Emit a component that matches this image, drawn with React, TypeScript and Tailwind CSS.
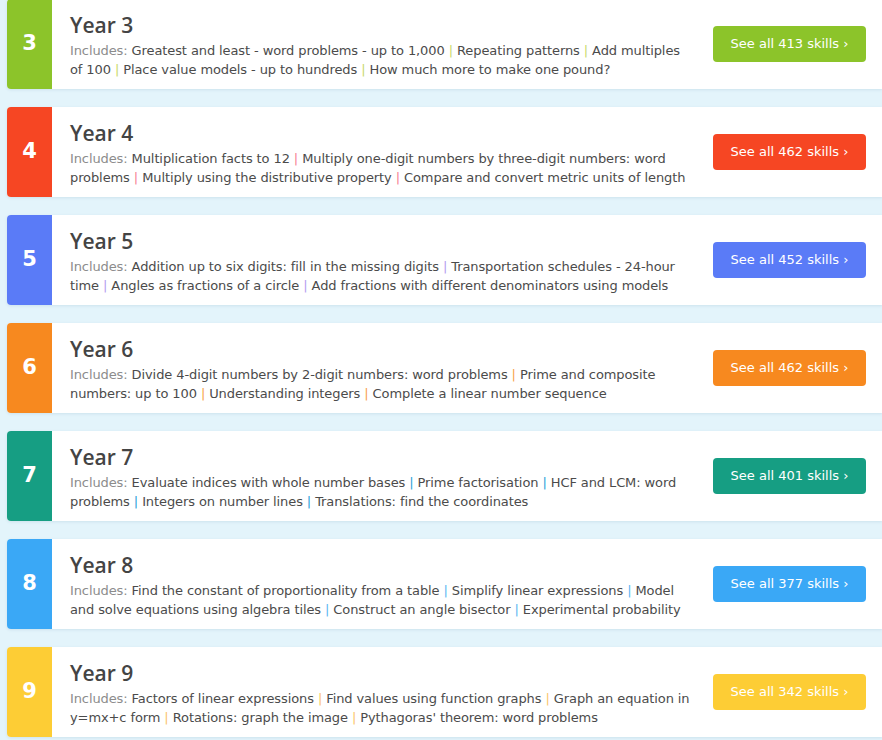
import React from "react";

type Year = {
  n: number;
  color: string;
  sep: string;
  skills: number;
  items: string[];
};

const years: Year[] = [
  {
    n: 3,
    color: "bg-[#8cc42a]",
    sep: "text-[#c9d96a]",
    skills: 413,
    items: [
      "Greatest and least - word problems - up to 1,000",
      "Repeating patterns",
      "Add multiples of 100",
      "Place value models - up to hundreds",
      "How much more to make one pound?",
    ],
  },
  {
    n: 4,
    color: "bg-[#f64623]",
    sep: "text-[#f77f93]",
    skills: 462,
    items: [
      "Multiplication facts to 12",
      "Multiply one-digit numbers by three-digit numbers: word problems",
      "Multiply using the distributive property",
      "Compare and convert metric units of length",
    ],
  },
  {
    n: 5,
    color: "bg-[#5a7bf7]",
    sep: "text-[#b49cf0]",
    skills: 452,
    items: [
      "Addition up to six digits: fill in the missing digits",
      "Transportation schedules - 24-hour time",
      "Angles as fractions of a circle",
      "Add fractions with different denominators using models",
    ],
  },
  {
    n: 6,
    color: "bg-[#f7891f]",
    sep: "text-[#f8a24a]",
    skills: 462,
    items: [
      "Divide 4-digit numbers by 2-digit numbers: word problems",
      "Prime and composite numbers: up to 100",
      "Understanding integers",
      "Complete a linear number sequence",
    ],
  },
  {
    n: 7,
    color: "bg-[#169e83]",
    sep: "text-[#2a9fd8]",
    skills: 401,
    items: [
      "Evaluate indices with whole number bases",
      "Prime factorisation",
      "HCF and LCM: word problems",
      "Integers on number lines",
      "Translations: find the coordinates",
    ],
  },
  {
    n: 8,
    color: "bg-[#3aa8f6]",
    sep: "text-[#5cb6f2]",
    skills: 377,
    items: [
      "Find the constant of proportionality from a table",
      "Simplify linear expressions",
      "Model and solve equations using algebra tiles",
      "Construct an angle bisector",
      "Experimental probability",
    ],
  },
  {
    n: 9,
    color: "bg-[#fdcd35]",
    sep: "text-[#fbc46a]",
    skills: 342,
    items: [
      "Factors of linear expressions",
      "Find values using function graphs",
      "Graph an equation in y=mx+c form",
      "Rotations: graph the image",
      "Pythagoras' theorem: word problems",
    ],
  },
];

function Card({ y }: { y: Year }) {
  return (
    <div className="flex h-[90px] ml-[7px] bg-white rounded-l-[4px] shadow-[0_1px_3px_rgba(80,130,160,0.15)] overflow-hidden">
      <div
        className={`${y.color} w-[45px] shrink-0 flex items-center justify-center text-white font-bold text-[21px]`}
      >
        {y.n}
      </div>
      <div className="w-[642px] shrink-0 pl-[18px] pt-[12px]">
        <div className="text-[21px] leading-[28px] text-[#444444] font-semibold font-['Open_Sans','DejaVu_Sans',sans-serif]">
          Year {y.n}
        </div>
        <div className="text-[13px] leading-[19px] text-[#4b4b4b] mt-[2px] tracking-[-0.1px]">
          <span className="text-[#8c8c8c]">Includes: </span>
          {y.items.map((it, i) => (
            <React.Fragment key={i}>
              {i > 0 && <span className={y.sep}> | </span>}
              {it}
            </React.Fragment>
          ))}
        </div>
      </div>
      <div className="flex-1 flex items-center justify-end pr-[16px]">
        <div
          className={`${y.color} w-[153px] h-[36px] rounded-[4px] text-white text-[13px] flex items-center justify-center`}
        >
          See all {y.skills} skills ›
        </div>
      </div>
    </div>
  );
}

export default function App() {
  return (
    <div className="w-[882px] h-[740px] overflow-hidden bg-[#e3f4fb] font-['DejaVu_Sans',Verdana,sans-serif]">
      <div className="flex flex-col gap-[18px] mt-[-1px]">
        {years.map((y) => (
          <Card key={y.n} y={y} />
        ))}
      </div>
    </div>
  );
}
